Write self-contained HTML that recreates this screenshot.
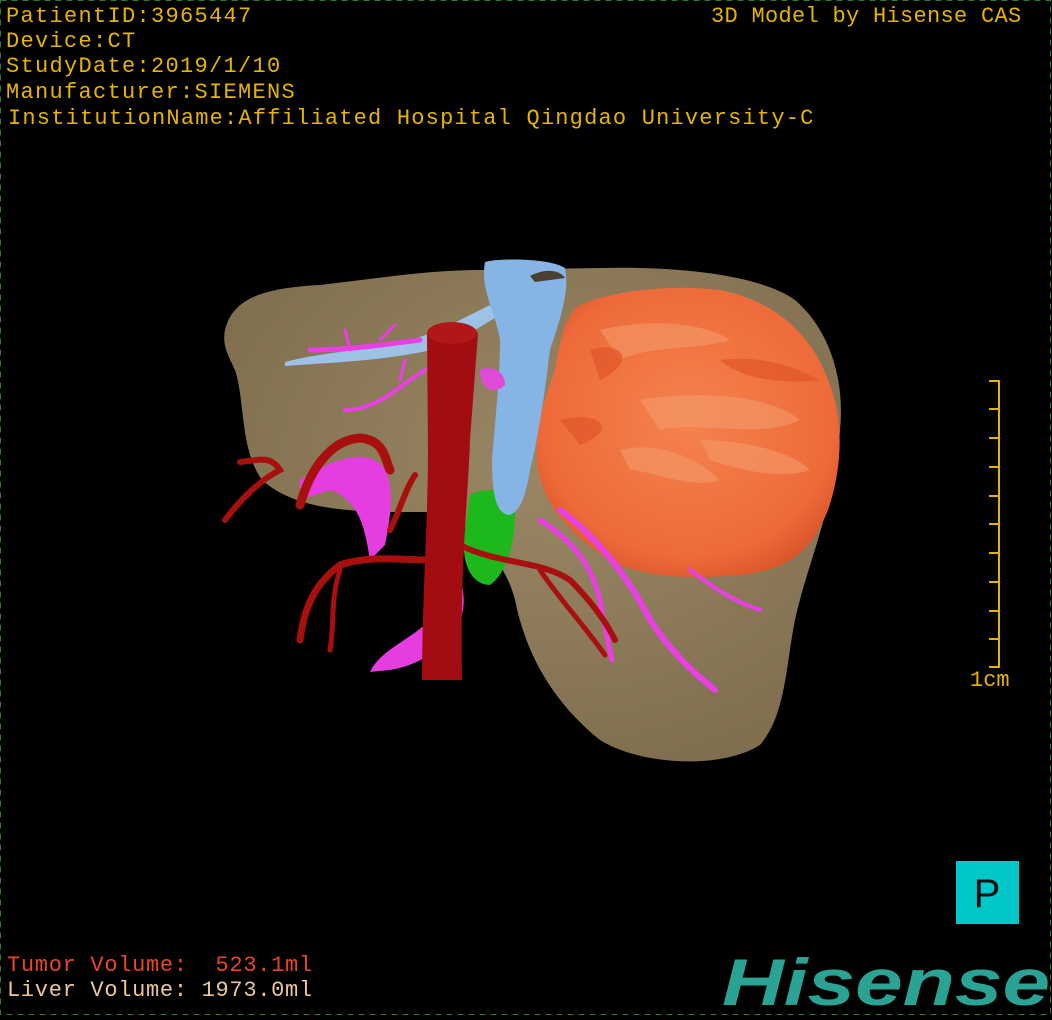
<!DOCTYPE html>
<html><head><meta charset="utf-8"><style>
html,body{margin:0;padding:0;background:#000;}
body{width:1052px;height:1020px;position:relative;overflow:hidden;}
.t{position:absolute;font-family:"Liberation Mono",monospace;font-size:22px;line-height:25px;white-space:pre;color:#e6b400;letter-spacing:1.3px;}
svg{position:absolute;left:0;top:0;}
</style></head><body>
<svg width="1052" height="1020" viewBox="0 0 1052 1020">
<defs>
<radialGradient id="lv" cx="0.55" cy="0.4" r="0.7"><stop offset="0" stop-color="#9a8764"/><stop offset="1" stop-color="#7d6c4d"/></radialGradient>
<radialGradient id="tm" cx="0.5" cy="0.45" r="0.6"><stop offset="0" stop-color="#f4834f"/><stop offset="0.8" stop-color="#ee6a3a"/><stop offset="1" stop-color="#d9552a"/></radialGradient>
</defs>
<rect x="0.5" y="0.5" width="1050" height="1014" fill="none" stroke="#2f7a2f" stroke-dasharray="6,5"/>
<path d="M225,330 C232,300 260,288 320,285 C380,278 430,270 480,270 L600,268 C680,266 760,275 795,300 C830,330 845,380 840,430 C835,500 810,560 800,600 C785,650 790,710 760,745 C720,770 640,765 600,740 C550,700 525,650 515,600 C505,560 470,520 430,512 L380,512 C330,510 290,505 262,480 C240,450 245,400 235,370 C228,355 222,345 225,330 Z" fill="url(#lv)"/>
<path d="M580,305 C620,288 680,285 720,290 C770,300 810,330 828,380 C845,420 842,470 828,510 C812,550 790,570 740,575 C700,578 660,580 620,565 C580,545 545,510 538,470 C532,430 545,400 555,370 C560,340 565,315 580,305 Z" fill="url(#tm)"/>
<path d="M600,330 C640,320 700,320 730,340 C700,350 650,345 620,360 Z M640,400 C700,390 770,395 800,420 C760,440 700,420 660,430 Z M620,450 C660,440 700,460 720,480 C690,490 650,470 630,470 Z M700,440 C740,440 790,450 810,470 C780,480 740,470 710,460 Z" fill="#f59a6a" opacity="0.6"/>
<path d="M590,350 C620,340 640,360 600,380 Z M560,420 C600,410 620,430 580,445 Z M720,360 C760,355 790,365 820,380 C780,385 740,378 720,360 Z" fill="#e0552a" opacity="0.7"/>
<path d="M470,495 C490,485 515,490 515,515 C515,545 505,575 490,585 C470,585 460,560 465,530 Z" fill="#1cb81c"/>
<path d="M285,362 C330,350 390,350 440,330 L500,300 L505,312 L450,345 C400,360 340,362 285,366 Z" fill="#9ec2e6"/>
<path d="M485,262 C500,258 550,258 565,268 C570,290 560,320 550,350 C545,390 540,430 530,470 C525,500 520,510 510,515 C495,515 492,490 492,460 C495,420 500,380 500,340 C495,310 480,290 485,262 Z" fill="#86b4e4"/>
<path d="M530,276 C545,268 560,270 565,278 L535,282 Z" fill="#4a4030"/>
<g stroke="#ec3ee6" fill="none" stroke-linecap="round">
<path d="M310,350 C350,350 380,345 420,340" stroke-width="5"/>
<path d="M345,410 C370,410 390,395 410,380 L425,370" stroke-width="4"/>
<path d="M350,350 L345,330 M380,340 L395,325 M400,380 L405,360" stroke-width="3"/>
<path d="M540,520 C570,540 590,560 600,600 C605,630 610,650 612,660" stroke-width="5"/>
<path d="M560,510 C600,540 630,580 650,620 C670,650 690,670 715,690" stroke-width="6"/>
<path d="M690,570 C710,585 730,600 760,610" stroke-width="4"/>
</g>
<path d="M300,480 C330,460 370,445 385,470 C395,490 390,520 385,545 L370,560 C365,530 360,500 330,490 L300,500 Z" fill="#e53ddf"/>
<path d="M480,370 C490,365 505,370 505,385 C495,395 480,390 480,370 Z" fill="#e04ad8"/>
<path d="M445,560 C465,570 470,610 455,630 C440,650 420,665 390,670 L370,672 C380,650 410,640 430,620 C440,600 440,580 445,560 Z" fill="#e53ddf"/>
<g stroke="#a81010" fill="none" stroke-linecap="round">
<path d="M300,505 C310,470 330,440 360,438 C385,440 385,460 390,470" stroke-width="9"/>
<path d="M240,462 C260,460 270,455 280,470 C260,480 240,500 225,520" stroke-width="6"/>
<path d="M430,560 C400,560 370,555 340,565 C320,580 305,600 300,640" stroke-width="7"/>
<path d="M340,570 C330,600 335,620 330,650" stroke-width="5"/>
<path d="M460,545 C500,565 540,560 570,580 C590,600 605,620 615,640" stroke-width="6"/>
<path d="M540,570 C560,600 580,620 605,655" stroke-width="5"/>
<path d="M390,530 C400,510 405,490 415,475" stroke-width="6"/>
</g>
<path d="M427,333 C440,320 470,320 478,333 L470,440 C468,500 460,560 462,680 L422,680 C422,600 428,520 428,450 Z" fill="#a30c10"/>
<ellipse cx="452" cy="333" rx="25" ry="11" fill="#b01818"/>
<g stroke="#e6b400" stroke-width="2">
<line x1="999" y1="380" x2="999" y2="668"/>
<line x1="989" y1="381" x2="999" y2="381"/><line x1="989" y1="409" x2="999" y2="409"/><line x1="989" y1="438" x2="999" y2="438"/><line x1="989" y1="467" x2="999" y2="467"/><line x1="989" y1="496" x2="999" y2="496"/><line x1="989" y1="524" x2="999" y2="524"/><line x1="989" y1="553" x2="999" y2="553"/><line x1="989" y1="582" x2="999" y2="582"/><line x1="989" y1="611" x2="999" y2="611"/><line x1="989" y1="639" x2="999" y2="639"/><line x1="989" y1="667" x2="999" y2="667"/>
</g>
<rect x="956" y="861" width="63" height="63" fill="#00c8c8"/>
<text x="987" y="907" font-family="Liberation Sans,sans-serif" font-size="40" fill="#111" text-anchor="middle">P</text>
<text x="722" y="1005" font-family="Liberation Sans,sans-serif" font-weight="bold" font-style="italic" font-size="66" fill="#2aa394" textLength="328" lengthAdjust="spacingAndGlyphs">Hisense</text>
</svg>
<div class="t" style="left:6px;top:4px">PatientID:3965447</div>
<div class="t" style="left:6px;top:29px">Device:CT</div>
<div class="t" style="left:6px;top:54px">StudyDate:2019/1/10</div>
<div class="t" style="left:6px;top:80px">Manufacturer:SIEMENS</div>
<div class="t" style="left:8px;top:106px;letter-spacing:1.2px">InstitutionName:Affiliated Hospital Qingdao University-C</div>
<div class="t" style="left:711px;top:4px;letter-spacing:0.3px">3D Model by Hisense CAS</div>
<div class="t" style="left:970px;top:668px;letter-spacing:0">1cm</div>
<div class="t" style="left:7px;top:953px;color:#e8452a;letter-spacing:0.7px">Tumor Volume:  523.1ml</div>
<div class="t" style="left:7px;top:978px;color:#eac898;letter-spacing:0.7px">Liver Volume: 1973.0ml</div>
</body></html>
